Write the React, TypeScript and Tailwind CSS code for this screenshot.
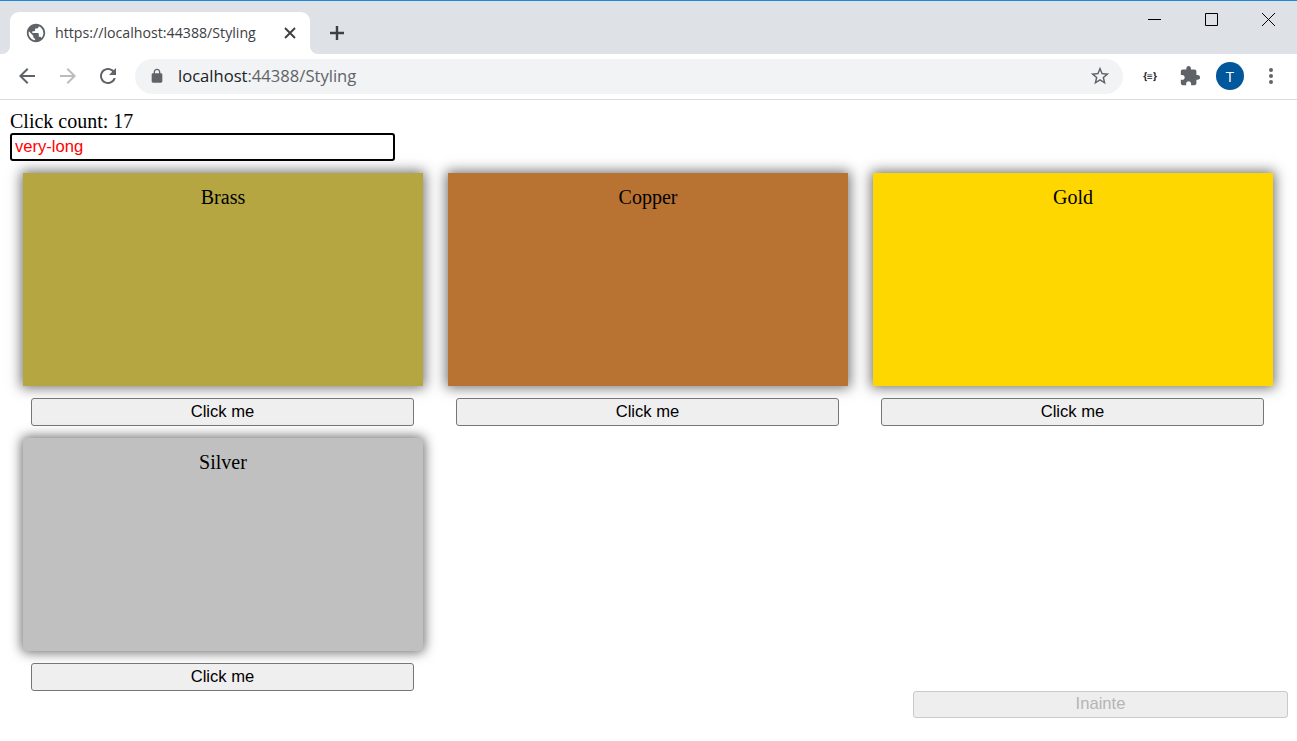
import React from "react";

const Icon = ({ d, className }: { d: string; className: string }) => (
  <svg viewBox="0 0 24 24" fill="currentColor" className={className}>
    <path d={d} />
  </svg>
);

const GLOBE = "M12 2C6.48 2 2 6.48 2 12s4.48 10 10 10 10-4.48 10-10S17.52 2 12 2zm-1 17.93c-3.95-.49-7-3.85-7-7.93 0-.62.08-1.21.21-1.79L9 15v1c0 1.1.9 2 2 2v1.93zm6.9-2.54c-.26-.81-1-1.39-1.9-1.39h-1v-3c0-.55-.45-1-1-1H8v-2h2c.55 0 1-.45 1-1V7h2c1.1 0 2-.9 2-2v-.41c2.93 1.19 5 4.06 5 7.41 0 2.08-.8 3.97-2.1 5.39z";
const BACK = "M20 11H7.83l5.59-5.59L12 4l-8 8 8 8 1.41-1.41L7.83 13H20v-2z";
const FORWARD = "M12 4l-1.41 1.41L16.17 11H4v2h12.17l-5.58 5.59L12 20l8-8z";
const REFRESH = "M17.65 6.35C16.2 4.9 14.21 4 12 4c-4.42 0-7.99 3.58-7.99 8s3.57 8 7.99 8c3.73 0 6.84-2.55 7.73-6h-2.08c-.82 2.33-3.04 4-5.65 4-3.31 0-6-2.69-6-6s2.69-6 6-6c1.66 0 3.14.69 4.22 1.78L13 11h7V4l-2.35 2.35z";
const LOCK = "M18 8h-1V6c0-2.76-2.24-5-5-5S7 3.24 7 6v2H6c-1.1 0-2 .9-2 2v10c0 1.1.9 2 2 2h12c1.1 0 2-.9 2-2V10c0-1.1-.9-2-2-2zM9 6c0-1.66 1.34-3 3-3s3 1.34 3 3v2H9V6z";
const STAR = "M22 9.24l-7.19-.62L12 2 9.19 8.63 2 9.24l5.46 4.73L5.82 21 12 17.27 18.18 21l-1.63-7.03L22 9.24zM12 15.4l-3.76 2.27 1-4.28-3.32-2.88 4.38-.38L12 6.1l1.71 4.04 4.38.38-3.32 2.88 1 4.28L12 15.4z";
const PUZZLE = "M20.5 11H19V7c0-1.1-.9-2-2-2h-4V3.5C13 2.12 11.88 1 10.5 1S8 2.12 8 3.5V5H4c-1.1 0-1.99.9-1.99 2v3.8H3.5c1.49 0 2.7 1.21 2.7 2.7s-1.21 2.7-2.7 2.7H2V20c0 1.1.9 2 2 2h3.8v-1.5c0-1.49 1.21-2.7 2.7-2.7 1.49 0 2.7 1.21 2.7 2.7V22H17c1.1 0 2-.9 2-2v-4h1.5c1.38 0 2.5-1.12 2.5-2.5S21.88 11 20.5 11z";

const BrowserChrome = () => (
  <div className="font-['Open_Sans',sans-serif]">
    <div className="h-[54px] bg-[#dee1e6] border-t border-[#1e88d8] flex items-end pl-[10px] relative">
      <div className="w-[300px] h-[42px] bg-white rounded-t-[9px] flex items-center pl-[16px] pr-[14px] relative">
        {/* curved feet of the active tab */}
        <div className="absolute -left-[8px] bottom-0 w-[8px] h-[8px] bg-white">
          <div className="w-full h-full bg-[#dee1e6] rounded-br-[8px]" />
        </div>
        <div className="absolute -right-[8px] bottom-0 w-[8px] h-[8px] bg-white">
          <div className="w-full h-full bg-[#dee1e6] rounded-bl-[8px]" />
        </div>
        <Icon d={GLOBE} className="w-[22px] h-[22px] -ml-[1px] text-[#5f6368] shrink-0" />
        <span className="ml-[8px] text-[14.2px] text-[#3c4043] whitespace-nowrap">https://localhost:44388/Styling</span>
        <svg viewBox="0 0 12 12" className="w-[12px] h-[12px] ml-auto text-[#3c4043]" fill="none" stroke="currentColor" strokeWidth="1.9">
          <path d="M1 1l10 10M11 1L1 11" />
        </svg>
      </div>
      <svg viewBox="0 0 16 16" className="w-[16px] h-[16px] ml-[19px] mb-[13px] text-[#3c4043]" fill="none" stroke="currentColor" strokeWidth="2.4">
        <path d="M8 1v14M1 8h14" />
      </svg>
      <div className="absolute right-0 top-0 h-[40px] flex items-start pt-[12px]">
        <svg viewBox="0 0 13 13" className="w-[13px] h-[13px] mr-[44px] text-black" fill="none" stroke="currentColor" strokeWidth="1">
          <path d="M0 6.5h13" />
        </svg>
        <svg viewBox="0 0 13 13" className="w-[13px] h-[13px] mr-[44px] text-black" fill="none" stroke="currentColor" strokeWidth="1">
          <path d="M.5.5h12v12H.5z" />
        </svg>
        <svg viewBox="0 0 13 13" className="w-[13px] h-[13px] mr-[22px] text-black" fill="none" stroke="currentColor" strokeWidth="1">
          <path d="M0 0l13 13M13 0L0 13" />
        </svg>
      </div>
    </div>
    <div className="h-[46px] bg-white border-b border-[#dadce0] flex items-center pb-[1px]">
      <Icon d={BACK} className="w-[24px] h-[24px] ml-[15px] text-[#5f6368]" />
      <Icon d={FORWARD} className="w-[24px] h-[24px] ml-[17px] text-[#babcbe]" />
      <Icon d={REFRESH} className="w-[24px] h-[24px] ml-[16px] text-[#5f6368]" />
      <div className="ml-[15px] w-[988px] h-[35px] rounded-full bg-[#f1f3f4] flex items-center pl-[14px] pr-[12px]">
        <Icon d={LOCK} className="w-[16px] h-[16px] text-[#5f6368]" />
        <span className="ml-[13px] pt-[1px] text-[16.6px] whitespace-nowrap text-[#202124]">
          localhost<span className="text-[#5f6368]">:44388/Styling</span>
        </span>
        <Icon d={STAR} className="w-[22px] h-[22px] ml-auto text-[#5f6368]" />
      </div>
      <span className="ml-[18px] w-[18px] text-center text-[10px] font-bold text-[#202124] whitespace-nowrap">{"{≡}"}</span>
      <Icon d={PUZZLE} className="w-[22px] h-[22px] ml-[20px] text-[#5f6368]" />
      <div className="ml-[15px] w-[28px] h-[28px] rounded-full bg-[#01579b] text-white text-[15px] flex items-center justify-center">T</div>
      <svg viewBox="0 0 4 16" className="w-[4px] h-[16px] ml-[25px] text-[#5f6368]" fill="currentColor">
        <circle cx="2" cy="2" r="2" />
        <circle cx="2" cy="8" r="2" />
        <circle cx="2" cy="14" r="2" />
      </svg>
    </div>
  </div>
);

const metals = [
  { name: "Brass", bg: "bg-[#b5a642]", rounded: "" },
  { name: "Copper", bg: "bg-[#b87333]", rounded: "" },
  { name: "Gold", bg: "bg-[#ffd700]", rounded: "" },
  { name: "Silver", bg: "bg-[#c0c0c0]", rounded: "rounded-[5px]" },
];

const MetalCard = ({ name, bg, rounded }: { name: string; bg: string; rounded: string }) => (
  <div>
    <div className={`ml-[13px] mr-[12px] mt-[12px] h-[213px] pt-[13px] text-center text-[20px] leading-[22px] text-black shadow-[0_0_12px_2px_rgba(0,0,0,0.55)] ${bg} ${rounded}`}>
      {name}
    </div>
    <button className="block mt-[12px] mx-[21px] w-[383px] h-[28px] bg-[#efefef] border border-[#767676] rounded-[3px] text-[16.6px] leading-none text-black font-['Liberation_Sans',sans-serif]">
      Click me
    </button>
  </div>
);

export default function App() {
  return (
    <div className="bg-white min-h-[741px] font-['Liberation_Serif',serif]">
      <BrowserChrome />
      <div className="pl-[10px] pt-[10px] flex flex-col">
        <div className="text-[20px] leading-[23px] text-black">Click count: 17</div>
        <input
          readOnly
          value="very-long"
          className="block w-[385px] h-[28px] border-2 border-black rounded-[3px] px-[3px] text-[16.6px] text-[#ff0000] font-['Liberation_Sans',sans-serif] outline-none"
        />
        <div className="grid grid-cols-[repeat(3,425px)]">
          {metals.map((m) => (
            <MetalCard key={m.name} {...m} />
          ))}
        </div>
        <button
          disabled
          className="self-end mr-[9px] w-[375px] h-[27px] pb-[1px] bg-[#eeeeee] border border-[#c9c9c9] rounded-[3px] text-[16.6px] leading-none text-[#b5b5b5] font-['Liberation_Sans',sans-serif]"
        >
          Inainte
        </button>
      </div>
    </div>
  );
}
